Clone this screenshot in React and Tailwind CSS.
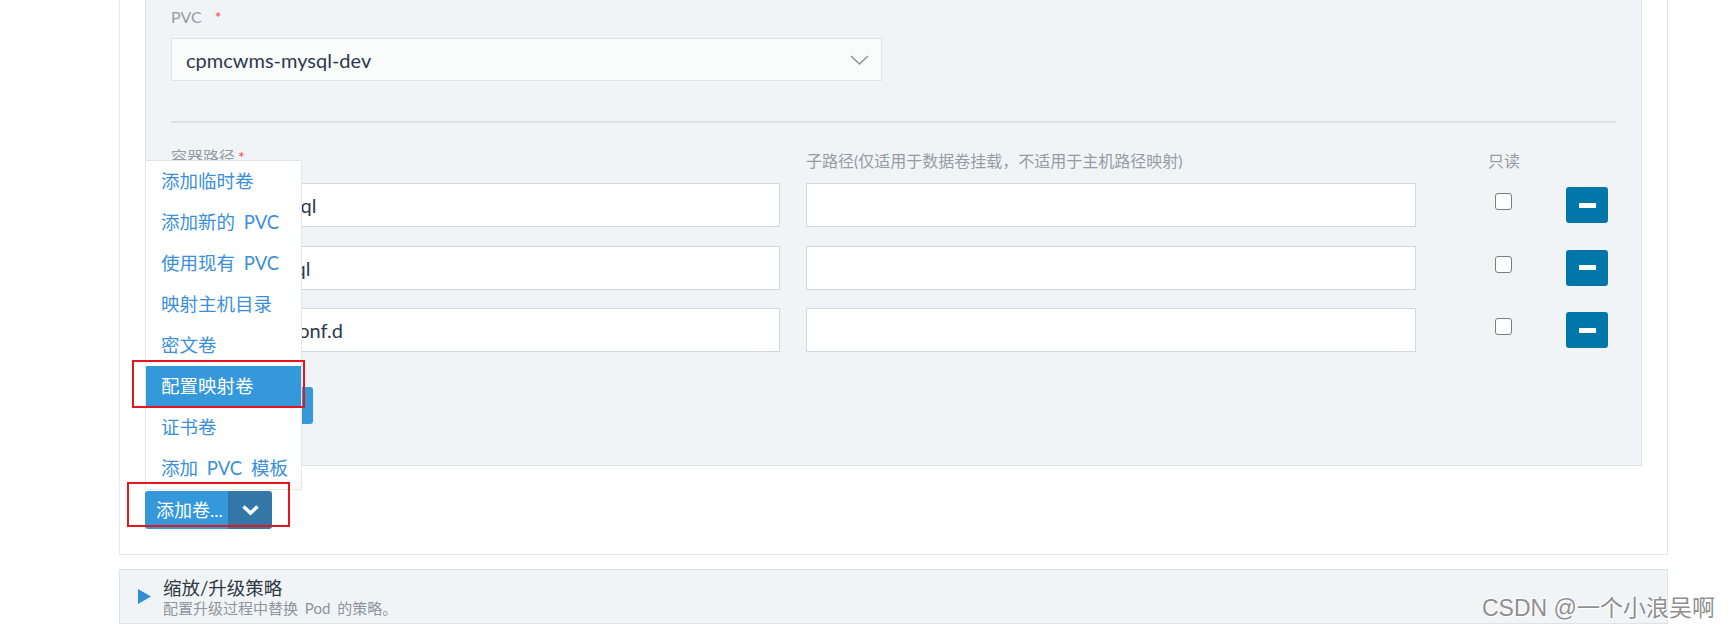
import { useState } from "react";

const mounts = [
  { path: "/var/log/mysql", sub: "" },
  { path: "/var/lib/mysql", sub: "" },
  { path: "/etc/mysql/conf.d", sub: "" },
];

const volumeKinds = [
  "添加临时卷",
  "添加新的 PVC",
  "使用现有 PVC",
  "映射主机目录",
  "密文卷",
  "配置映射卷",
  "证书卷",
  "添加 PVC 模板",
];

function Chevron({ className }) {
  return (
    <svg width="19" height="10" viewBox="0 0 19 10" className={className}>
      <polyline points="1,1 9.5,9 18,1" fill="none" stroke="#8a9199" strokeWidth="1.5" />
    </svg>
  );
}

export default function App() {
  const [active] = useState("配置映射卷");

  return (
    <div className="relative w-[1728px] h-[630px] bg-white overflow-hidden font-['Lato','Noto_Sans_CJK_SC',sans-serif]">
      <div className="ml-[119px] w-[1549px]">
        {/* Card */}
        <div className="border border-t-0 border-[#e6e9eb] px-[25px] pb-[25px]">
          {/* Volume panel */}
          <div className="border border-t-0 border-[#dde3e6] bg-[#f1f4f6] px-[25px] pb-[41px]">
            <div className="pt-[7px] flex items-center text-[16px] leading-[20px] text-[#959ca3]">
              PVC <span className="ml-[13px] text-[#ef4444]">*</span>
            </div>
            <div className="mt-[11px] h-[43px] w-[711px] flex items-center justify-between bg-[#fafbfb] border border-[#dfe4e7] pl-[14px] pr-[12px]">
              <span className="text-[20px] text-[#2e3a4b]">cpmcwms-mysql-dev</span>
              <Chevron />
            </div>
            <div className="mt-[40px] h-[2px] bg-[#dce2e4]" />

            {/* column labels */}
            <div className="mt-[24px] h-[36px] flex text-[16px] leading-[20px] text-[#959ca3]">
              <div className="w-[609px] flex">
                容器路径 <span className="ml-[3px] text-[#ef4444]">*</span>
              </div>
              <div className="ml-[26px] mt-[4px] w-[610px]">子路径(仅适用于数据卷挂载，不适用于主机路径映射)</div>
              <div className="ml-[72px] mt-[4px]">只读</div>
            </div>

            {/* mount rows */}
            <div className="flex flex-col gap-[18.5px]">
              {mounts.map((m) => (
                <div key={m.path} className="h-[44px] flex items-center">
                  <div className="w-[609px] h-[44px] bg-white border border-[#d1d8dc] pl-[14px] flex items-center text-[20px] text-[#2e3a4b]">
                    {m.path}
                  </div>
                  <div className="ml-[26px] w-[610px] h-[44px] bg-white border border-[#d1d8dc]">{m.sub}</div>
                  <div className="ml-[79px] self-start mt-[10px] w-[17px] h-[17px] rounded-[3px] border-[1.5px] border-[#7c7c7c] bg-white" />
                  <button className="ml-[54px] w-[42px] h-[36px] rounded-[3px] bg-[#0077a8] flex items-center justify-center">
                    <span className="w-[17px] h-[5px] bg-white" />
                  </button>
                </div>
              ))}
            </div>

            <button className="mt-[35px] h-[37px] w-[142px] rounded-[3px] bg-[#3498db] text-white text-[18px]">
              添加挂载点
            </button>
          </div>

          {/* Add volume split button */}
          <div className="mt-[25px] flex h-[38px] w-[127px] rounded-[3px] overflow-hidden">
            <div className="w-[83px] bg-[#3498db] text-white text-[18px] flex items-center pl-[11px] whitespace-nowrap overflow-hidden">
              添加卷...
            </div>
            <div className="w-[44px] bg-[#3277a8] flex items-center justify-center">
              <svg width="19" height="12" viewBox="0 0 19 12">
                <polyline points="2.5,2.5 9.5,9 16.5,2.5" fill="none" stroke="white" strokeWidth="3.5" />
              </svg>
            </div>
          </div>
        </div>

        {/* Scaling / upgrade policy */}
        <div className="mt-[14px] h-[55px] border border-[#dde3e6] bg-[#f1f4f6] flex items-center pl-[18px]">
          <svg width="13" height="15" viewBox="0 0 13 15">
            <polygon points="0,0 13,7.5 0,15" fill="#2f8fd6" />
          </svg>
          <div className="ml-[12px] flex flex-col">
            <span className="text-[18.5px] leading-[22px] text-[#2f3742]">缩放/升级策略</span>
            <span className="text-[15px] leading-[18px] text-[#8e959c] [word-spacing:3px]">配置升级过程中替换 Pod 的策略。</span>
          </div>
        </div>
      </div>

      {/* Dropdown menu (opened upward) */}
      <div className="absolute left-[145px] top-[160px] w-[157px] bg-white border border-[#e4e7ea]">
        {volumeKinds.map((k) => (
          <div
            key={k}
            className={`h-[41px] px-[15px] flex items-center text-[18.5px] whitespace-nowrap [word-spacing:4px] ${
              k === active ? "bg-[#3498db] text-white" : "text-[#3b8fd9]"
            }`}
          >
            {k}
          </div>
        ))}
      </div>

      {/* annotation boxes */}
      <div className="absolute left-[132px] top-[360px] w-[173px] h-[48px] border-2 border-[#e4171f]" />
      <div className="absolute left-[127px] top-[482px] w-[163px] h-[45px] border-2 border-[#e4171f]" />

      {/* watermark */}
      <div className="absolute left-[1482px] top-[593px] text-[23px] leading-[30px] text-[#8f8f8f] font-['Liberation_Sans','Noto_Sans_CJK_SC',sans-serif] [text-shadow:1px_1px_0_#ffffff,-1px_-1px_0_#ffffff] whitespace-nowrap">
        CSDN @一个小浪吴啊
      </div>
    </div>
  );
}
